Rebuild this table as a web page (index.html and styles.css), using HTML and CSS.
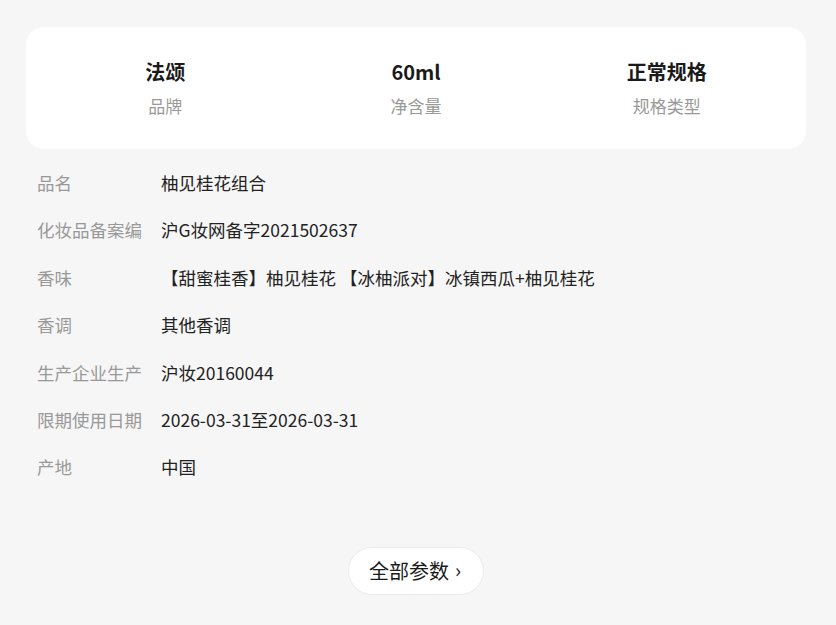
FILE: index.html
```html
<!DOCTYPE html>
<html lang="zh-CN">
<head>
    <meta charset="UTF-8">
    <meta name="viewport" content="width=device-width, initial-scale=1.0">
    <title>商品参数</title>
    <link rel="stylesheet" href="styles.css">
</head>
<body>
    <div class="container">
        <!-- 核心参数 -->
        <div class="summary">
            <div class="summary-item">
                <div class="summary-value">法颂</div>
                <div class="summary-label">品牌</div>
            </div>
            <div class="summary-item">
                <div class="summary-value">60ml</div>
                <div class="summary-label">净含量</div>
            </div>
            <div class="summary-item">
                <div class="summary-value">正常规格</div>
                <div class="summary-label">规格类型</div>
            </div>
        </div>

        <!-- 参数列表 -->
        <div class="params">
            <div class="param-row">
                <div class="param-label">品名</div>
                <div class="param-value">柚见桂花组合</div>
            </div>
            <div class="param-row">
                <div class="param-label">化妆品备案编</div>
                <div class="param-value">沪G妆网备字2021502637</div>
            </div>
            <div class="param-row">
                <div class="param-label">香味</div>
                <div class="param-value">【甜蜜桂香】柚见桂花 【冰柚派对】冰镇西瓜+柚见桂花</div>
            </div>
            <div class="param-row">
                <div class="param-label">香调</div>
                <div class="param-value">其他香调</div>
            </div>
            <div class="param-row">
                <div class="param-label">生产企业生产</div>
                <div class="param-value">沪妆20160044</div>
            </div>
            <div class="param-row">
                <div class="param-label">限期使用日期</div>
                <div class="param-value">2026-03-31至2026-03-31</div>
            </div>
            <div class="param-row">
                <div class="param-label">产地</div>
                <div class="param-value">中国</div>
            </div>
        </div>

        <div class="more">
            <button class="more-btn">全部参数<span class="chevron">›</span></button>
        </div>
    </div>
</body>
</html>
```

FILE: styles.css
```css
/* 全局 */
body {
    margin: 0;
    background-color: #f6f6f6;
    font-family: "Noto Sans CJK SC", "Noto Sans", sans-serif;
    color: #222;
}

.container {
    padding: 27px 30px 0 26px;
}

/* 核心参数卡片 */
.summary {
    display: flex;
    background-color: #fff;
    border-radius: 18px;
    padding: 31px 14px 31px;
}

.summary-item {
    flex: 1;
    text-align: center;
}

.summary-value {
    font-size: 20px;
    font-weight: 700;
    line-height: 28px;
    color: #1a1a1a;
}

.summary-label {
    margin-top: 8px;
    font-size: 17px;
    line-height: 24px;
    color: #999;
}

/* 参数列表 */
.params {
    margin-top: 10px;
    padding-left: 11px;
}

.param-row {
    display: flex;
    padding: 12px 0;
    font-size: 17.5px;
    line-height: 23.4px;
}

.param-label {
    width: 108px;
    flex-shrink: 0;
    margin-right: 16px;
    color: #999;
    white-space: nowrap;
}

.param-value {
    color: #222;
}

/* 全部参数按钮 */
.more {
    display: flex;
    justify-content: center;
    margin-top: 56px;
}

.more-btn {
    height: 48px;
    padding: 0 22px 0 20px;
    border: 1px solid #ececec;
    border-radius: 24px;
    background-color: #fff;
    font-family: inherit;
    font-size: 20px;
    font-weight: 400;
    color: #1a1a1a;
    cursor: pointer;
}

.chevron {
    margin-left: 6px;
    font-size: 20px;
    position: relative;
    top: -1px;
}
```
